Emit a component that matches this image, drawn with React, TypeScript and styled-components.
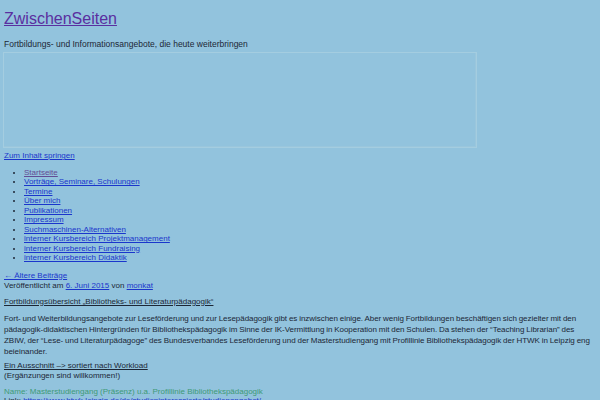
import { FunctionComponent } from "react";
import styled, { createGlobalStyle } from "styled-components";

const GlobalStyle = createGlobalStyle`
  html, body {
    margin: 0;
    padding: 0;
    background: #92c3dd;
  }
  body {
    font-family: "Liberation Sans", Arial, sans-serif;
    font-size: 8px;
    color: #1c2736;
  }
`;

const Page = styled.div`
  width: 600px;
  height: 400px;
  overflow: hidden;
  padding: 0 0 0 4px;
  box-sizing: border-box;
  display: flex;
  flex-direction: column;
`;

const Header = styled.header`
  display: flex;
  flex-direction: column;
  padding-top: 10px;
`;

const SiteTitle = styled.a`
  font-size: 16px;
  line-height: 18px;
  color: #5a2fa0;
  text-decoration: underline;
  align-self: flex-start;
`;

const Tagline = styled.div`
  margin-top: 11px;
  font-size: 8.5px;
  line-height: 10px;
  color: #1c2736;
`;

const Banner = styled.div`
  margin: 3px 0 0 -1px;
  width: 474px;
  height: 96px;
  border: 1px solid #a4cde0;
  box-shadow: inset -1px -1px 0 #9ac6dc;
  box-sizing: border-box;
`;

const Link = styled.a<{ $visited?: boolean; $dark?: boolean }>`
  color: ${(p) => (p.$dark ? "#1c2736" : p.$visited ? "#634c94" : "#1a36cc")};
  text-decoration: underline;
`;

const SkipLink = styled(Link)`
  margin-top: 3px;
  line-height: 10px;
  align-self: flex-start;
`;

const Menu = styled.ul`
  margin: 7px 0 0;
  padding-left: 20px;
  list-style: disc;
  line-height: 9.45px;
  font-size: 8px;
`;

const Nav = styled.div`
  margin-top: 8px;
  line-height: 10px;
`;

const Meta = styled.div`
  line-height: 10px;
`;

const EntryTitle = styled.div`
  margin-top: 6px;
  line-height: 10px;
`;

const Paragraph = styled.p`
  margin: 6px 0 0;
  line-height: 11.3px;
  letter-spacing: -0.04px;
  word-spacing: -0.3px;
  white-space: nowrap;
`;

const Lines = styled.div`
  margin-top: 3px;
  line-height: 10px;
`;

const Green = styled.div`
  margin-top: 7px;
  line-height: 8px;
  color: #3e9a76;
`;

const Cut = styled.div`
  line-height: 10px;
  color: #1c2736;
`;

const menuItems = [
  "Startseite",
  "Vorträge, Seminare, Schulungen",
  "Termine",
  "Über mich",
  "Publikationen",
  "Impressum",
  "Suchmaschinen-Alternativen",
  "interner Kursbereich Projektmanagement",
  "interner Kursbereich Fundraising",
  "interner Kursbereich Didaktik",
];

const App: FunctionComponent = () => {
  return (
    <>
      <GlobalStyle />
      <Page>
        <Header>
          <SiteTitle href="#">ZwischenSeiten</SiteTitle>
          <Tagline>Fortbildungs- und Informationsangebote, die heute weiterbringen</Tagline>
          <Banner />
          <SkipLink href="#">Zum Inhalt springen</SkipLink>
        </Header>
        <Menu>
          {menuItems.map((item, i) => (
            <li key={item}>
              <Link href="#" $visited={i === 0}>
                {item}
              </Link>
            </li>
          ))}
        </Menu>
        <Nav>
          <Link href="#">← Ältere Beiträge</Link>
        </Nav>
        <Meta>
          Veröffentlicht am <Link href="#">6. Juni 2015</Link> von{" "}
          <Link href="#">monkat</Link>
        </Meta>
        <EntryTitle>
          <Link href="#" $dark>
            Fortbildungsübersicht „Bibliotheks- und Literaturpädagogik“
          </Link>
        </EntryTitle>
        <Paragraph>
          Fort- und Weiterbildungsangebote zur Leseförderung und zur Lesepädagogik gibt es
          inzwischen einige. Aber wenig Fortbildungen beschäftigen sich gezielter mit den
          <br />
          pädagogik-didaktischen Hintergründen für Bibliothekspädagogik im Sinne der
          IK-Vermittlung in Kooperation mit den Schulen. Da stehen der “Teaching Librarian” des
          <br />
          ZBIW, der “Lese- und Literaturpädagoge” des Bundesverbandes Leseförderung und der
          Masterstudiengang mit Profillinie Bibliothekspädagogik der HTWK in Leipzig eng
          <br />
          beieinander.
        </Paragraph>
        <Lines>
          <Link href="#" $dark>
            Ein Ausschnitt –&gt; sortiert nach Workload
          </Link>
          <br />
          (Ergänzungen sind willkommen!)
        </Lines>
        <Green>Name: Masterstudiengang (Präsenz) u.a. Profillinie Bibliothekspädagogik</Green>
        <Cut>
          Link: <Link href="#">https://www.htwk-leipzig.de/de/studieninteressierte/studienangebot/</Link>
        </Cut>
      </Page>
    </>
  );
};

export default App;
